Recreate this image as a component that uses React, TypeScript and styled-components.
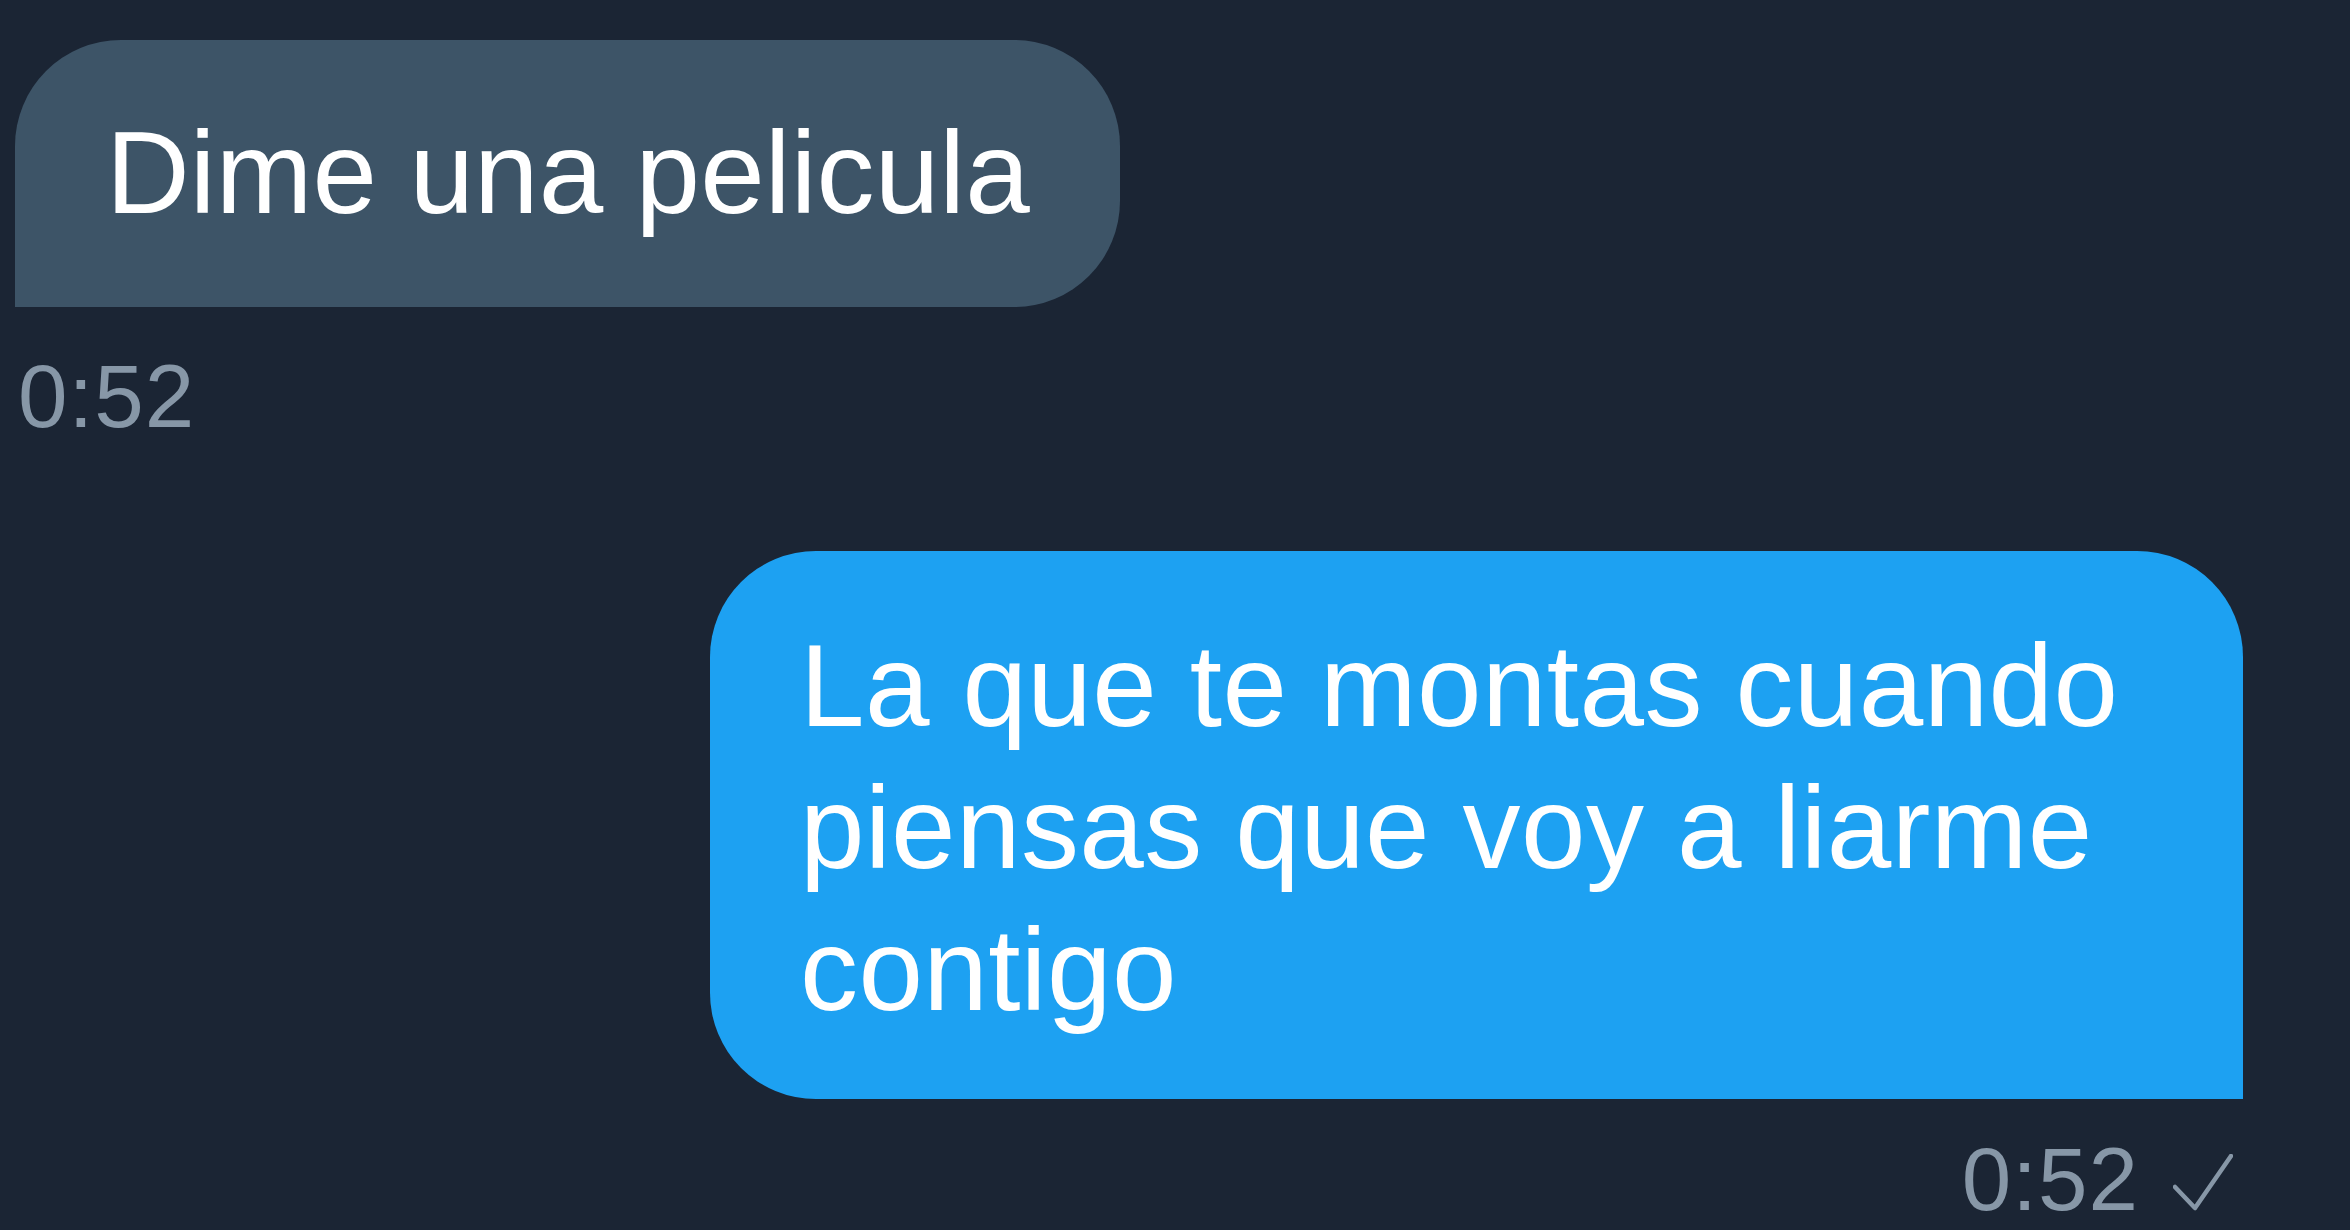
import React from 'react';
import styled, { createGlobalStyle } from 'styled-components';

const GlobalStyle = createGlobalStyle`
  html, body {
    margin: 0;
    padding: 0;
    background: #1b2534;
  }
  body {
    font-family: 'Liberation Sans', Arial, sans-serif;
  }
`;

const Container = styled.div`
  width: 2350px;
  min-height: 1230px;
  box-sizing: border-box;
  padding: 40px 107px 0 15px;
  background: #1b2534;
  display: flex;
  flex-direction: column;
`;

const Group = styled.div<{ $out?: boolean }>`
  display: flex;
  flex-direction: column;
  align-items: ${(p) => (p.$out ? 'flex-end' : 'flex-start')};
  margin-top: ${(p) => (p.$out ? '115px' : '0')};
`;

const Bubble = styled.div<{ $out?: boolean }>`
  box-sizing: border-box;
  width: ${(p) => (p.$out ? '1533px' : 'auto')};
  padding: ${(p) => (p.$out ? '64px 90px 58px 90px' : '62px 90px 63px 91px')};
  background: ${(p) => (p.$out ? '#1da1f2' : '#3d5467')};
  border-radius: ${(p) => (p.$out ? '106px 106px 0 106px' : '106px 106px 106px 0')};
  color: #ffffff;
  font-size: 116px;
  line-height: 142px;
  letter-spacing: ${(p) => (p.$out ? '0.4px' : '0.1px')};
`;

const Meta = styled.div<{ $out?: boolean }>`
  display: flex;
  align-items: flex-end;
  gap: 34px;
  margin-top: ${(p) => (p.$out ? '40px' : '49px')};
  padding-left: ${(p) => (p.$out ? '0' : '3px')};
  padding-right: ${(p) => (p.$out ? '10px' : '0')};
  color: #8797a7;
  font-size: 89px;
  line-height: 80px;
  letter-spacing: 1px;
`;

const Check = styled.svg`
  width: 60px;
  height: 58px;
  margin-bottom: 7px;
  flex-shrink: 0;
`;

const App: React.FC = () => {
  return (
    <Container>
      <GlobalStyle />
      <Group>
        <Bubble>Dime una pelicula</Bubble>
        <Meta>0:52</Meta>
      </Group>
      <Group $out>
        <Bubble $out>La que te montas cuando piensas que voy a liarme contigo</Bubble>
        <Meta $out>
          <span>0:52</span>
          <Check viewBox="0 0 60 58" fill="none">
            <path d="M2 33 L22 54 L58 2" stroke="#8797a7" strokeWidth="4.5" strokeLinecap="round" strokeLinejoin="round" />
          </Check>
        </Meta>
      </Group>
    </Container>
  );
};

export default App;
